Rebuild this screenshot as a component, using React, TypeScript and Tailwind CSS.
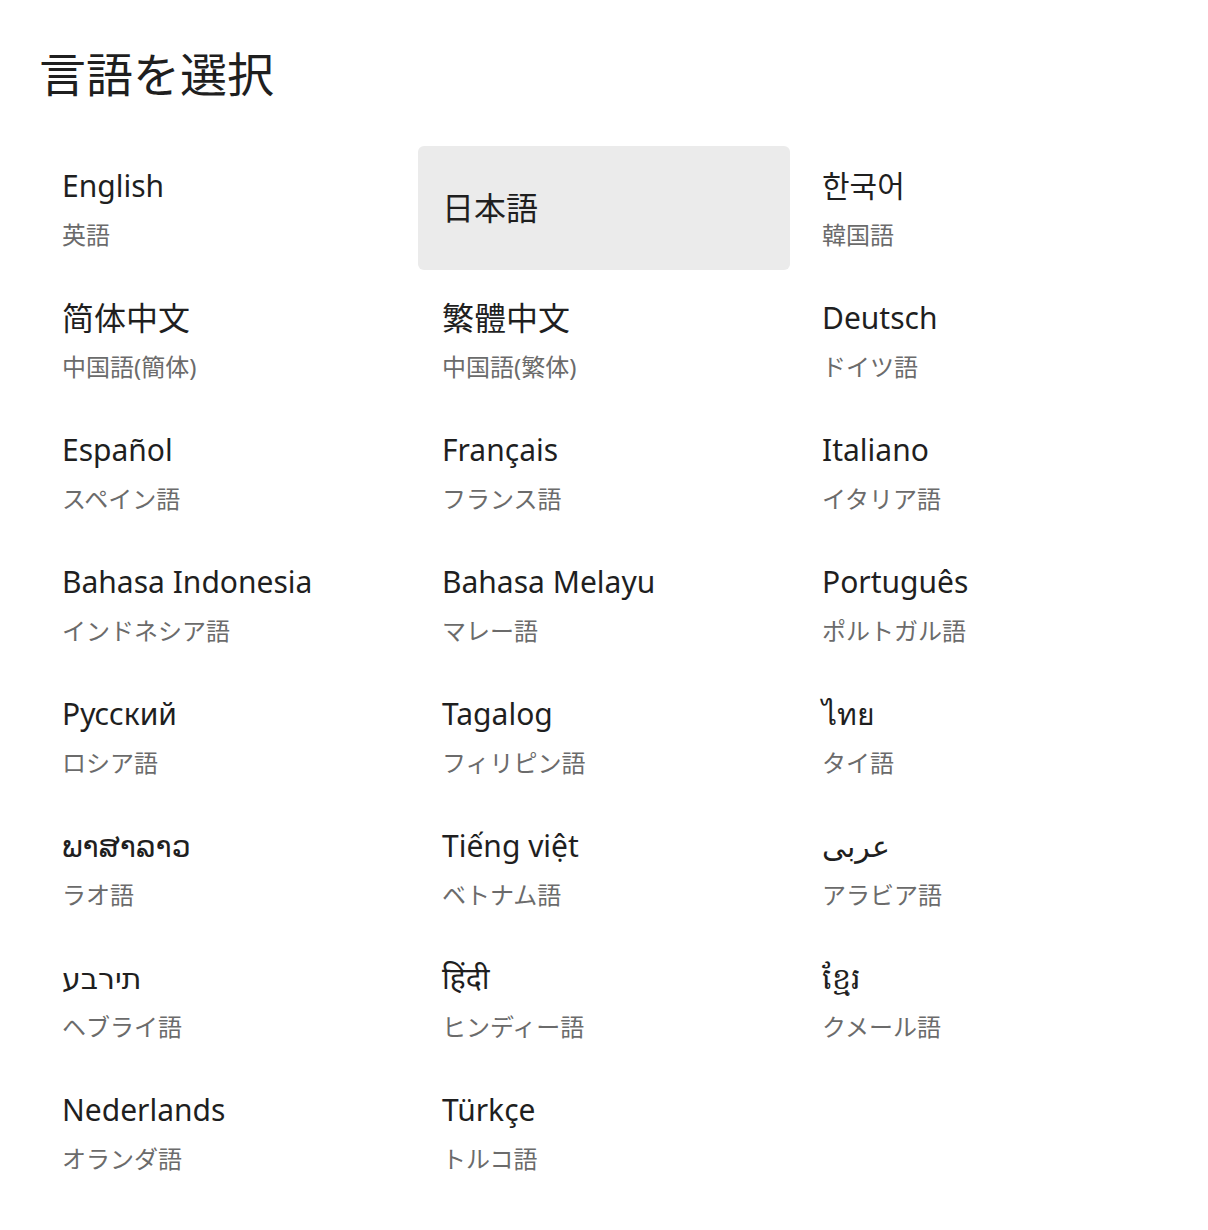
const LANGUAGES: { name: string; sub?: string; selected?: boolean; cjk?: boolean; ltr?: boolean }[] = [
  { name: 'English', sub: '英語' },
  { name: '日本語', selected: true, cjk: true },
  { name: '한국어', sub: '韓国語' },
  { name: '简体中文', sub: '中国語(簡体)', cjk: true },
  { name: '繁體中文', sub: '中国語(繁体)', cjk: true },
  { name: 'Deutsch', sub: 'ドイツ語' },
  { name: 'Español', sub: 'スペイン語' },
  { name: 'Français', sub: 'フランス語' },
  { name: 'Italiano', sub: 'イタリア語' },
  { name: 'Bahasa Indonesia', sub: 'インドネシア語' },
  { name: 'Bahasa Melayu', sub: 'マレー語' },
  { name: 'Português', sub: 'ポルトガル語' },
  { name: 'Русский', sub: 'ロシア語' },
  { name: 'Tagalog', sub: 'フィリピン語' },
  { name: 'ไทย', sub: 'タイ語' },
  { name: 'ພາສາລາວ', sub: 'ラオ語' },
  { name: 'Tiếng việt', sub: 'ベトナム語' },
  { name: 'عربى', sub: 'アラビア語' },
  { name: 'עברית', sub: 'ヘブライ語', ltr: true },
  { name: 'हिंदी', sub: 'ヒンディー語' },
  { name: 'ខ្មែរ', sub: 'クメール語' },
  { name: 'Nederlands', sub: 'オランダ語' },
  { name: 'Türkçe', sub: 'トルコ語' },
]

export default function App() {
  return (
    <div className="min-h-[1230px] bg-white px-[38px] pt-[38px] font-['Noto_Sans','Noto_Sans_CJK_JP','DejaVu_Sans',sans-serif] text-[#1f1f1f]">
      <h1 className="pl-[1px] text-[47px] leading-[72px] font-normal">言語を選択</h1>

      <div className="mt-[36px] grid w-[1132px] grid-cols-3 gap-2">
        {LANGUAGES.map(lang => (
          <div
            key={lang.name}
            className={[
              'flex h-[124px] flex-col justify-center gap-[14px] rounded-md px-6',
              lang.selected ? 'bg-[#ebebeb]' : '',
            ].join(' ')}
          >
            <span
              className={[
                'leading-[40px]',
                lang.cjk ? 'text-[32px]' : 'text-[30px]',
                lang.ltr ? '[unicode-bidi:bidi-override] [direction:ltr] font-medium' : '',
              ].join(' ')}
            >
              {lang.name}
            </span>
            {lang.sub && (
              <span className="text-[24px] leading-[30px] text-[#6b6b6b]">{lang.sub}</span>
            )}
          </div>
        ))}
      </div>
    </div>
  )
}
